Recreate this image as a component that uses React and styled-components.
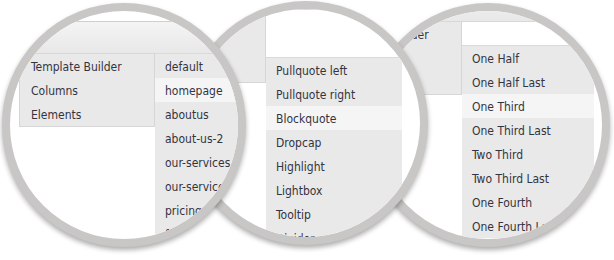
import React from 'react';
import styled, { createGlobalStyle } from 'styled-components';

const GlobalStyle = createGlobalStyle`
    html, body {
        margin: 0;
        padding: 0;
        background: #fff;
    }
    body {
        font-family: "DejaVu Sans Condensed", "DejaVu Sans", Tahoma, sans-serif;
    }
`;

const Stage = styled.div`
    width: 614px;
    height: 260px;
    box-sizing: border-box;
    padding: 1px 0 0 2px;
    display: flex;
    align-items: flex-start;
    overflow: hidden;
`;

// one magnifier lens, later lenses tuck under the earlier ones
const Lens = styled.div`
    position: relative;
    z-index: ${p => p.$layer};
    flex: none;
    width: 244px;
    height: 244px;
    box-sizing: border-box;
    margin-left: ${p => (p.$overlap ? '-62px' : '0')};
    margin-top: ${p => p.$drop}px;
    border: 8px solid #c8c7c5;
    border-radius: 50%;
    overflow: hidden;
    background: #fff;
    box-shadow: 0 3px 5px rgba(0, 0, 0, 0.32);
`;

// the magnified piece of the page inside a lens
const Scene = styled.div`
    width: 700px;
    margin-left: ${p => p.$x - 200}px;
    margin-top: ${p => p.$y}px;
`;

const TopBar = styled.div`
    height: 31px;
    background: linear-gradient(#f4f4f4, #e8e8e8);
    border-top: 1px solid #cfcfcf;
    border-bottom: 1px solid #d8d8d8;
`;

const Body = styled.div`
    display: flex;
    align-items: flex-start;
    padding-left: 200px;
`;

const ParentMenu = styled.div`
    width: 136px;
    box-sizing: border-box;
    background: #e9e9e9;
    border-left: 1px solid #d6d6d6;
    border-right: 1px solid #d6d6d6;
    border-bottom: 1px solid #d6d6d6;
`;

const SubMenu = styled.div`
    width: ${p => p.$width}px;
    background: #e9e9e9;
    border-top: 1px solid #dadada;
    margin-top: ${p => p.$offset - 1}px;
`;

const Item = styled.div`
    height: 24px;
    box-sizing: border-box;
    padding-top: 2px;
    line-height: 22px;
    padding-left: ${p => p.$pad}px;
    font-size: 12px;
    color: #34343f;
    white-space: nowrap;
    background: ${p => (p.$hover ? '#f5f5f5' : 'transparent')};
`;

const parents = ['Template Builder', 'Columns', 'Elements'];

const lenses = [
    {
        x: 9, y: 10, drop: 2, layer: 3, open: 0, width: 150, hover: 1,
        items: ['default', 'homepage', 'aboutus', 'about-us-2', 'our-services', 'our-services-2', 'pricing', 'faq'],
    },
    {
        x: -62, y: -32, drop: 0, layer: 2, open: 2, width: 136, hover: 2,
        items: ['Pullquote left', 'Pullquote right', 'Blockquote', 'Dropcap', 'Highlight', 'Lightbox', 'Tooltip', 'Divider'],
    },
    {
        x: -48, y: -22, drop: 2, layer: 1, open: 1, width: 132, hover: 2,
        items: ['One Half', 'One Half Last', 'One Third', 'One Third Last', 'Two Third', 'Two Third Last', 'One Fourth', 'One Fourth Last'],
    },
];

export default function App() {
    return (
        <>
            <GlobalStyle />
            <Stage>
                {lenses.map((l, i) => (
                    <Lens key={i} $layer={l.layer} $drop={l.drop} $overlap={i > 0}>
                        <Scene $x={l.x} $y={l.y}>
                            <TopBar />
                            <Body>
                                <ParentMenu>
                                    {parents.map(p => (
                                        <Item key={p} $pad={11}>{p}</Item>
                                    ))}
                                </ParentMenu>
                                <SubMenu $width={l.width} $offset={l.open * 24}>
                                    {l.items.map((it, j) => (
                                        <Item key={it} $pad={10} $hover={j === l.hover}>{it}</Item>
                                    ))}
                                </SubMenu>
                            </Body>
                        </Scene>
                    </Lens>
                ))}
            </Stage>
        </>
    );
}
